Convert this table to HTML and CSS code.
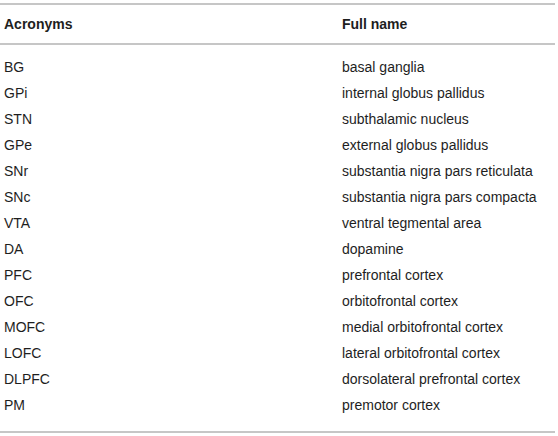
FILE: index.html
```html
<!DOCTYPE html>
<html>
<head>
<meta charset="utf-8">
<link rel="stylesheet" href="styles.css">
</head>
<body>
<table class="tbl">
  <thead>
    <tr><th class="c1">Acronyms</th><th class="c2">Full name</th></tr>
  </thead>
  <tbody>
    <tr><td class="c1">BG</td><td class="c2">basal ganglia</td></tr>
    <tr><td class="c1">GPi</td><td class="c2">internal globus pallidus</td></tr>
    <tr><td class="c1">STN</td><td class="c2">subthalamic nucleus</td></tr>
    <tr><td class="c1">GPe</td><td class="c2">external globus pallidus</td></tr>
    <tr><td class="c1">SNr</td><td class="c2">substantia nigra pars reticulata</td></tr>
    <tr><td class="c1">SNc</td><td class="c2">substantia nigra pars compacta</td></tr>
    <tr><td class="c1">VTA</td><td class="c2">ventral tegmental area</td></tr>
    <tr><td class="c1">DA</td><td class="c2">dopamine</td></tr>
    <tr><td class="c1">PFC</td><td class="c2">prefrontal cortex</td></tr>
    <tr><td class="c1">OFC</td><td class="c2">orbitofrontal cortex</td></tr>
    <tr><td class="c1">MOFC</td><td class="c2">medial orbitofrontal cortex</td></tr>
    <tr><td class="c1">LOFC</td><td class="c2">lateral orbitofrontal cortex</td></tr>
    <tr><td class="c1">DLPFC</td><td class="c2">dorsolateral prefrontal cortex</td></tr>
    <tr><td class="c1">PM</td><td class="c2">premotor cortex</td></tr>
  </tbody>
</table>
</body>
</html>
```
FILE: styles.css
```css
html, body {
  margin: 0;
  padding: 0;
  background: #ffffff;
}
body {
  padding-top: 3px;
  font-family: "Liberation Sans", Arial, sans-serif;
  font-size: 14px;
  color: #1e1e1e;
}
.tbl {
  width: 555px;
  border-collapse: collapse;
  border-top: 2px solid #c6c6c6;
  border-bottom: 2px solid #c6c6c6;
}
.tbl th {
  text-align: left;
  font-weight: bold;
  height: 38px;
  padding: 0;
  border-bottom: 2px solid #c6c6c6;
  vertical-align: middle;
}
.tbl td {
  height: 26px;
  padding: 0;
  vertical-align: middle;
}
.tbl tbody tr:first-child td {
  padding-top: 9px;
}
.tbl tbody tr:last-child td {
  padding-bottom: 13px;
}
.c1 {
  width: 338px;
  padding-left: 4px !important;
}
.c2 {
  width: auto;
}
```
